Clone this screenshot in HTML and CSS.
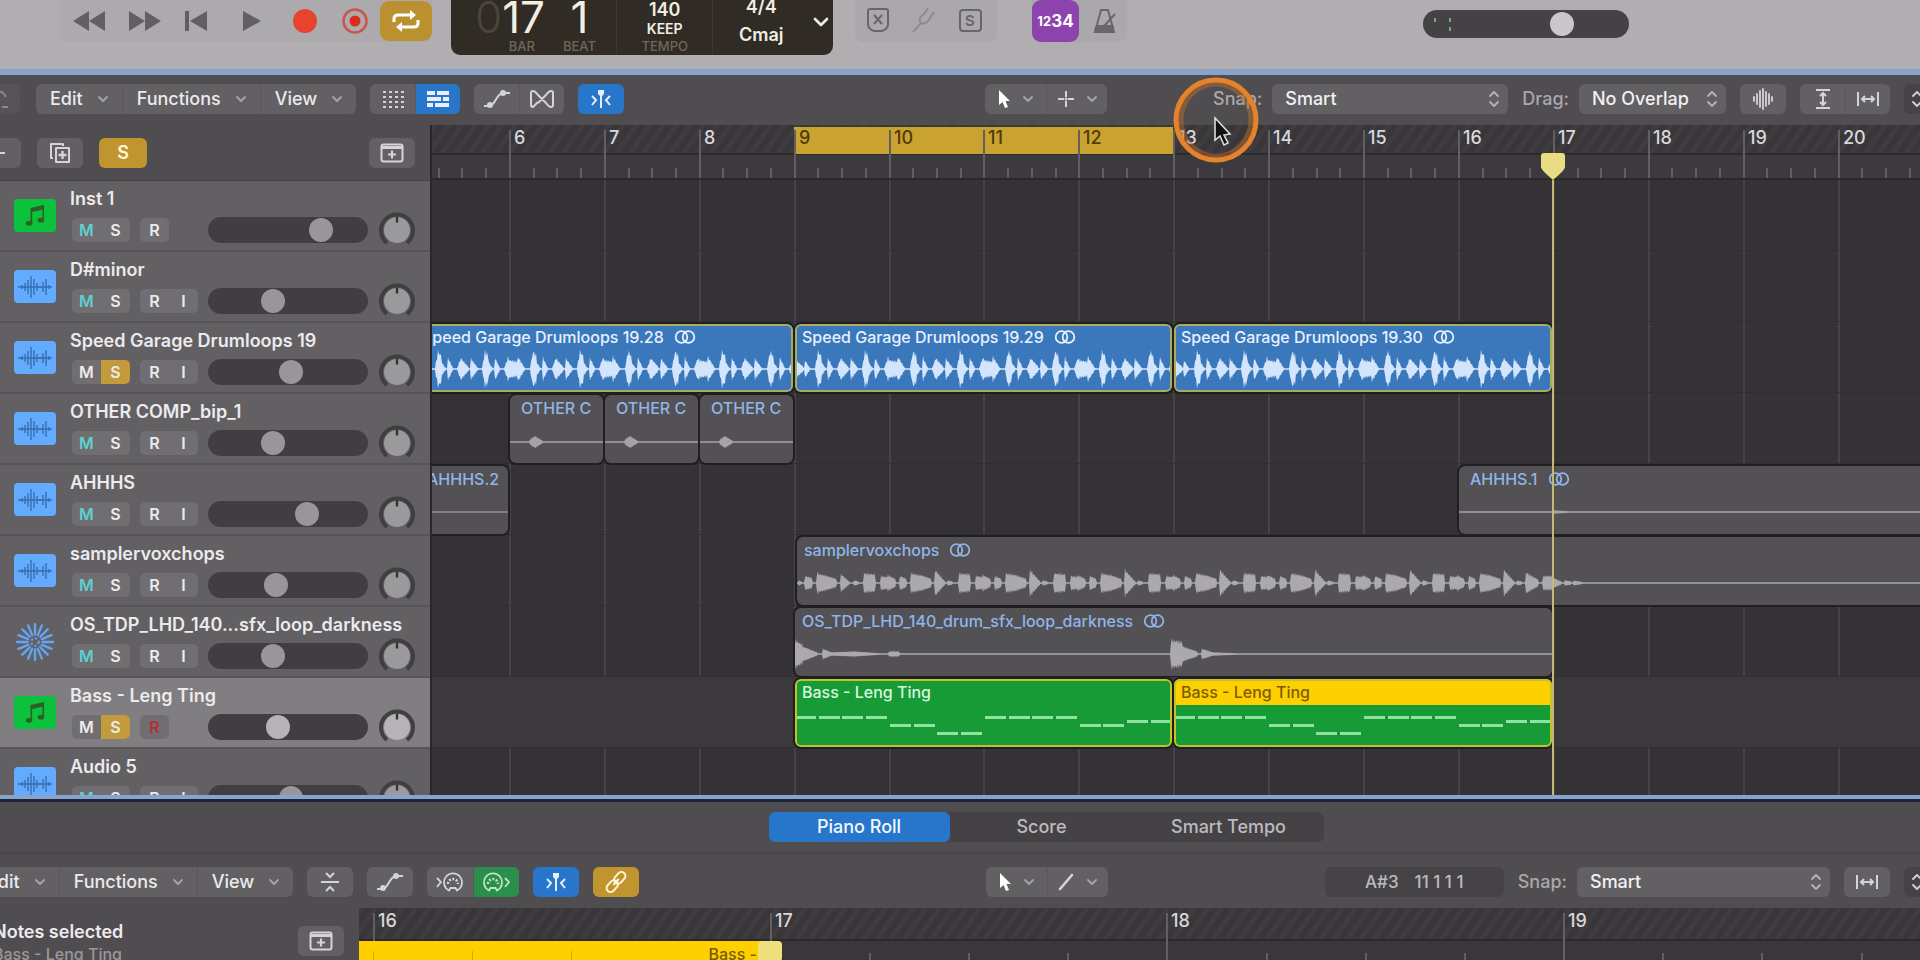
FILE: index.html
```html
<!DOCTYPE html>
<html lang="en">
<head>
<meta charset="utf-8">
<title>Arrangement</title>
<link rel="stylesheet" href="styles.css">
</head>
<body>
<svg class="defs" aria-hidden="true">
  <symbol id="chev" viewBox="0 0 12 12"><path d="M2 4l4 4 4-4" fill="none" stroke="currentColor" stroke-width="1.8" stroke-linecap="round" stroke-linejoin="round"/></symbol>
  <symbol id="updown" viewBox="0 0 12 20"><path d="M2 7l4-4 4 4M2 13l4 4 4-4" fill="none" stroke="currentColor" stroke-width="1.8" stroke-linecap="round" stroke-linejoin="round"/></symbol>
  <symbol id="dots" viewBox="0 0 24 18"><g fill="currentColor"><path id="dr" d="M2 1h3v2H2zM8 1h3v2H8zM14 1h3v2h-3zM20 1h3v2h-3z"/><use href="#dr" y="5"/><use href="#dr" y="10"/><use href="#dr" y="15"/></g></symbol>
  <symbol id="lanes" viewBox="0 0 24 18"><path d="M1 1h8v4H1zM11 1h12v4H11zM1 7h14v4H1zM17 7h6v4h-6zM1 13h6v4H1zM9 13h14v4H9z" fill="currentColor"/></symbol>
  <symbol id="auto" viewBox="0 0 28 20"><path d="M1 17h6C13 15 13 5 20 4h7" fill="none" stroke="currentColor" stroke-width="2"/><circle cx="7" cy="16" r="3" fill="currentColor"/><circle cx="20" cy="4" r="3" fill="currentColor"/></symbol>
  <symbol id="flex" viewBox="0 0 26 20"><path d="M9 13L4 18Q2 18 2 16V4Q2 2 4 2Q6 2 9 6L17 14Q20 18 22 18Q24 18 24 16V4Q24 2 22 2Q20 2 17 6L9 14" fill="none" stroke="currentColor" stroke-width="2" stroke-linejoin="round"/></symbol>
  <symbol id="catch" viewBox="0 0 22 20"><path d="M8 1h6v4l-3 3-3-3z" fill="currentColor"/><path d="M11 6v13M2 7l4 4-4 5M20 7l-4 4 4 5" fill="none" stroke="currentColor" stroke-width="2"/></symbol>
  <symbol id="arrow" viewBox="0 0 14 20"><path d="M2 1v15l3.500-3 2.500 6 3-1-2.500-6H13z" fill="#fff"/></symbol>
  <symbol id="plus" viewBox="0 0 18 18"><path d="M9 1v6M9 11v6M1 9h6M11 9h6" stroke="currentColor" stroke-width="2" fill="none"/><circle cx="9" cy="9" r="1.500" fill="currentColor"/></symbol>
  <symbol id="wave" viewBox="0 0 22 22"><path d="M2 9v4M5 6v10M8 3v16M11 1v20M14 4v14M17 6v10M20 9v4" stroke="currentColor" stroke-width="1.800" stroke-linecap="round"/></symbol>
  <symbol id="vfit" viewBox="0 0 18 20"><path d="M2 1h14M2 19h14M9 4v12M6 7l3-3 3 3M6 13l3 3 3-3" fill="none" stroke="currentColor" stroke-width="2"/></symbol>
  <symbol id="hfit" viewBox="0 0 22 18"><path d="M1 2v14M21 2v14M5 9h12M8 6L5 9l3 3M14 6l3 3-3 3" fill="none" stroke="currentColor" stroke-width="2"/></symbol>
  <symbol id="copy" viewBox="0 0 22 22"><path d="M7 6h13v14H7zM4 16H2V2h12v2" fill="none" stroke="currentColor" stroke-width="2" stroke-linejoin="round"/><path d="M13.500 9v8M9.500 13h8" stroke="currentColor" stroke-width="2.400"/></symbol>
  <symbol id="add" viewBox="0 0 24 20"><rect x="1.500" y="1.500" width="21" height="17" rx="2" fill="none" stroke="currentColor" stroke-width="2"/><path d="M2 4.500h20" stroke="currentColor" stroke-width="3"/><path d="M12 7.500v8M8 11.500h8" stroke="currentColor" stroke-width="2.200"/></symbol>
  <symbol id="note" viewBox="0 0 24 26"><path d="M8 20V5l13-3v14" fill="none" stroke="currentColor" stroke-width="1.800"/><path d="M8 5l13-3v4L8 9z" fill="currentColor"/><ellipse cx="5.500" cy="21" rx="3.600" ry="2.600" fill="currentColor"/><ellipse cx="18.500" cy="17.500" rx="3.600" ry="2.600" fill="currentColor"/></symbol>
  <symbol id="audio" viewBox="0 0 36 26"><path d="M1 13h34M5 11v4M8 9v8M11 6v14M14 2v22M17 5v16M20 9v8M23 12v2M26 8v10M29 5v16M32 11v4" stroke="currentColor" stroke-width="1.400"/></symbol>
  <symbol id="burst" viewBox="-18 -18 36 36"><g stroke="currentColor" stroke-width="2.200" stroke-linecap="round"><path id="ry" d="M0-17V-7M0 17V7"/><use href="#ry" transform="rotate(22.500)"/><use href="#ry" transform="rotate(45)"/><use href="#ry" transform="rotate(67.500)"/><use href="#ry" transform="rotate(90)"/><use href="#ry" transform="rotate(112.500)"/><use href="#ry" transform="rotate(135)"/><use href="#ry" transform="rotate(157.500)"/></g><circle r="3.500" fill="none" stroke="currentColor" stroke-width="2" stroke-dasharray="2 2"/></symbol>
  <symbol id="knob" viewBox="0 0 36 36"><path d="M8 31A16 16 0 1 1 28 31" fill="none" stroke="#403e41" stroke-width="4"/><circle cx="18" cy="18" r="13" fill="currentColor"/><path d="M18 4.500v6" stroke="#333" stroke-width="2.400"/></symbol>
  <symbol id="loop" viewBox="0 0 22 14"><circle cx="7.500" cy="7" r="5.800" fill="none" stroke="currentColor" stroke-width="1.800"/><circle cx="14.500" cy="7" r="5.800" fill="none" stroke="currentColor" stroke-width="1.800"/></symbol>
  <symbol id="collapse" viewBox="0 0 20 22"><path d="M1 11h18M6 2l4 4 4-4M6 20l4-4 4 4" fill="none" stroke="currentColor" stroke-width="2"/></symbol>
  <symbol id="palette" viewBox="0 0 20 20"><path d="M6 18.500A9 9 0 1 1 14 18.500L12.500 16h-5z" fill="none" stroke="currentColor" stroke-width="1.800"/><path d="M5 12a5 5 0 0 1 10 0" fill="none" stroke="currentColor" stroke-width="2.600" stroke-dasharray="2 1.500"/></symbol>
  <symbol id="midiin" viewBox="0 0 28 20"><path d="M1 6l4 4-4 5" fill="none" stroke="currentColor" stroke-width="1.800"/><use href="#palette" x="7" width="20" height="20"/></symbol>
  <symbol id="midiout" viewBox="0 0 28 20"><path d="M22 6l4 4-4 5" fill="none" stroke="currentColor" stroke-width="1.800"/><use href="#palette" x="0" width="20" height="20"/></symbol>
  <symbol id="link" viewBox="0 0 24 24"><g fill="none" stroke="currentColor" stroke-width="2" transform="rotate(-48 12 12)"><rect x="0" y="8" width="13" height="8" rx="4"/><rect x="11" y="8" width="13" height="8" rx="4"/><path d="M8 12h8"/></g></symbol>
  <symbol id="pencil" viewBox="0 0 18 20"><path d="M3 17L15 3" stroke="currentColor" stroke-width="2.600" stroke-linecap="round"/></symbol>
</svg>

<div class="app">
  <header class="control-bar">
    <div class="transport">
      <button aria-label="Rewind"><svg width="34" height="22"><path d="M17 1v20L1 11zM33 1v20L17 11z"/></svg></button>
      <button aria-label="Forward"><svg width="34" height="22"><path d="M1 1v20l16-10zM17 1v20l16-10z"/></svg></button>
      <button aria-label="Go to beginning"><svg width="24" height="22"><path d="M1 1h4v20H1zM23 1v20L6 11z"/></svg></button>
      <button aria-label="Play"><svg width="20" height="22"><path d="M1 1l18 10L1 21z"/></svg></button>
      <button aria-label="Record"><svg width="26" height="26"><circle cx="13" cy="13" r="12" fill="#e8432f"/></svg></button>
      <button aria-label="Capture recording"><svg width="28" height="28"><circle cx="14" cy="14" r="11.500" fill="none" stroke="#c9544a" stroke-width="2.500"/><circle cx="14" cy="14" r="5.500" fill="#e02a1c"/></svg></button>
      <button class="cycle" aria-label="Cycle"><svg width="28" height="24" fill="none" stroke="#fff" stroke-width="3"><path d="M2 13V10q0-4 4-4h13M26 11v3q0 4-4 4H9"/><path d="M18 1l6 5-6 5zM10 13l-6 5 6 5z" fill="#fff" stroke="none"/></svg></button>
    </div>
    <div class="lcd">
      <div class="pos"><p><i>0</i>17</p><small>BAR</small></div>
      <div class="pos beat"><p>1</p><small>BEAT</small></div>
      <div class="cell"><b>140</b><em>KEEP</em><small>TEMPO</small></div>
      <div class="cell sig"><b>4/4</b><b>Cmaj</b></div>
      <button class="lcd-menu" aria-label="Display mode"><svg width="18" height="18" viewBox="0 0 12 12"><use href="#chev"/></svg></button>
    </div>
    <div class="modes">
      <button aria-label="Replace"><svg width="24" height="26" fill="none" stroke="#69666a" stroke-width="2"><path d="M4 2h16q2 0 2 2v13q0 5-6 7H8q-6-2-6-7V4q0-2 2-2zM8 8l8 9M16 8l-8 9"/></svg></button>
      <button aria-label="Tuner"><svg width="26" height="28" fill="none" stroke="#8d8a8e" stroke-width="2"><path d="M2 26l8-9q-4-4 3-9l4-6M10 17q5 2 9-5l4-6"/></svg></button>
      <button aria-label="Solo"><svg width="25" height="25"><rect x="2" y="2" width="21" height="21" rx="3" fill="none" stroke="#69666a" stroke-width="2"/><text x="12" y="18" text-anchor="middle" class="solo-s">S</text></svg></button>
    </div>
    <div class="count">
      <button class="count-in"><small>12</small>34</button>
      <button aria-label="Metronome"><svg width="26" height="26" fill="none" stroke="#69666a" stroke-width="2"><path d="M9 2h7l6 22H3zM4 18h17M12 18L23 6"/><path d="M4 19h17v5H3z" fill="#69666a"/></svg></button>
    </div>
    <div class="master-wrap">
      <input class="master" type="range" min="0" max="100" value="70" aria-label="Master volume">
      <svg width="32" height="28" stroke="#6fa58f" stroke-width="2"><path d="M12 8v4M27 8v4M27 17v4"/></svg>
    </div>
  </header>

  <section class="arrange">
    <div class="toolbar">
      <button class="btn edge" aria-label="Back"><svg width="14" height="20" fill="none" stroke="#8a878b" stroke-width="2"><path d="M0 3q4-2 8 5M4 18h6"/></svg></button>
      <div class="group menus">
        <button>Edit<svg class="chev"><use href="#chev"/></svg></button>
        <button>Functions<svg class="chev"><use href="#chev"/></svg></button>
        <button>View<svg class="chev"><use href="#chev"/></svg></button>
      </div>
      <div class="group icons">
        <button aria-label="Grid"><svg width="24" height="18"><use href="#dots"/></svg></button>
        <button class="blue" aria-label="Tracks"><svg width="24" height="18"><use href="#lanes"/></svg></button>
      </div>
      <div class="group icons">
        <button aria-label="Automation"><svg width="28" height="20"><use href="#auto"/></svg></button>
        <button aria-label="Flex"><svg width="26" height="20"><use href="#flex"/></svg></button>
      </div>
      <button class="btn blue" aria-label="Catch playhead"><svg width="22" height="20"><use href="#catch"/></svg></button>
      <div class="group tools">
        <button aria-label="Pointer tool"><svg width="14" height="20"><use href="#arrow"/></svg><svg class="chev"><use href="#chev"/></svg></button>
        <button aria-label="Marquee tool"><svg width="18" height="18"><use href="#plus"/></svg><svg class="chev"><use href="#chev"/></svg></button>
      </div>
      <label for="snap">Snap:</label>
      <span class="pick snap"><select id="snap"><option>Smart</option></select><svg width="12" height="20"><use href="#updown"/></svg></span>
      <label for="drag">Drag:</label>
      <span class="pick drag"><select id="drag"><option>No Overlap</option></select><svg width="12" height="20"><use href="#updown"/></svg></span>
      <button class="btn" aria-label="Waveform zoom"><svg width="22" height="22"><use href="#wave"/></svg></button>
      <div class="group icons">
        <button aria-label="Fit vertically"><svg width="18" height="20"><use href="#vfit"/></svg></button>
        <button aria-label="Fit horizontally"><svg width="22" height="18"><use href="#hfit"/></svg></button>
      </div>
      <button class="btn cut" aria-label="Vertical zoom"><svg width="12" height="20"><use href="#updown"/></svg></button>
    </div>

    <div class="workspace">
      <div class="track-column">
        <div class="track-tools">
          <button class="btn edge2" aria-label="Add track"><svg width="14" height="18"><path d="M0 9h6" stroke="#d5d3d6" stroke-width="2"/></svg></button>
          <button class="btn" aria-label="Duplicate track"><svg width="22" height="22"><use href="#copy"/></svg></button>
          <button class="btn gold">S</button>
          <button class="btn push" aria-label="Track header options"><svg width="24" height="20"><use href="#add"/></svg></button>
        </div>
        <div id="tracks"></div>
      </div>
      <div class="timeline">
        <div class="ruler" id="ruler"></div>
        <div id="lanes-area"></div>
        <svg class="playhead-cap" id="cap" width="26" height="28"><path d="M1 3q0-3 3-3h18q3 0 3 3v11q0 3-12 13Q1 17 1 14z" fill="#e9dc83"/></svg>
        <div class="playhead" id="playhead"></div>
      </div>
    </div>
  </section>

  <section class="editor">
    <nav class="tab-bar"><div class="tabs"><button class="on">Piano Roll</button><button>Score</button><button>Smart Tempo</button></div></nav>
    <div class="toolbar low">
      <div class="group menus">
        <button>Edit<svg class="chev"><use href="#chev"/></svg></button>
        <button>Functions<svg class="chev"><use href="#chev"/></svg></button>
        <button>View<svg class="chev"><use href="#chev"/></svg></button>
      </div>
      <button class="btn" aria-label="Collapse"><svg width="20" height="22"><use href="#collapse"/></svg></button>
      <button class="btn" aria-label="Automation"><svg width="28" height="20"><use href="#auto"/></svg></button>
      <div class="group icons">
        <button aria-label="MIDI in"><svg width="28" height="20"><use href="#midiin"/></svg></button>
        <button class="green" aria-label="MIDI out"><svg width="28" height="20"><use href="#midiout"/></svg></button>
      </div>
      <button class="btn blue" aria-label="Catch playhead"><svg width="22" height="20"><use href="#catch"/></svg></button>
      <button class="btn gold" aria-label="Link"><svg width="24" height="24"><use href="#link"/></svg></button>
      <div class="group tools">
        <button aria-label="Pointer tool"><svg width="14" height="20"><use href="#arrow"/></svg><svg class="chev"><use href="#chev"/></svg></button>
        <button aria-label="Pencil tool"><svg width="18" height="20"><use href="#pencil"/></svg><svg class="chev"><use href="#chev"/></svg></button>
      </div>
      <output class="readout"><span>A#3</span><span>11 1 1 1</span></output>
      <label for="snap2">Snap:</label>
      <span class="pick snap2"><select id="snap2"><option>Smart</option></select><svg width="12" height="20"><use href="#updown"/></svg></span>
      <button class="btn" aria-label="Fit horizontally"><svg width="22" height="18"><use href="#hfit"/></svg></button>
      <button class="btn cut" aria-label="Vertical zoom"><svg width="12" height="20"><use href="#updown"/></svg></button>
    </div>
    <div class="roll">
      <div class="roll-info">
        <div class="roll-text"><h2>Notes selected</h2><p>Bass - Leng Ting</p></div>
        <button class="btn" aria-label="Editor options"><svg width="24" height="20"><use href="#add"/></svg></button>
      </div>
      <div class="roll-ruler" id="roll"></div>
    </div>
  </section>
</div>

<svg class="pointer" width="86" height="88" aria-hidden="true">
  <ellipse cx="43" cy="43" rx="37" ry="38" fill="none" stroke="#b86c2c" stroke-opacity=".5" stroke-width="9"/>
  <ellipse cx="43" cy="43" rx="40" ry="40" fill="none" stroke="#e5822c" stroke-width="5"/>
  <path d="M42 41v22l5-4 4 9 4-2-4-8 6-1z" fill="#111" stroke="#ddd" stroke-width="1.600"/>
</svg>
<script src="app.js"></script>
</body>
</html>
```
FILE: styles.css
```css
* { box-sizing: border-box; }
body { margin: 0; background: #504d51; color: #eceaed; font: 500 18px/24px Inter, "Liberation Sans", sans-serif; }
button, select, input { font: inherit; color: inherit; margin: 0; }
button { border: 0; padding: 0; background: none; display: flex; align-items: center; justify-content: center; }
h2, p { margin: 0; }
svg { flex: none; display: block; }
.defs { position: absolute; width: 0; height: 0; }
.app { height: 100vh; display: flex; flex-direction: column; overflow: hidden; }

/* control bar */
.control-bar { height: 69px; flex: none; display: flex; align-items: flex-start; background: #b1aeb2; }
.transport { margin-left: 60px; height: 42px; width: 372px; padding-left: 12px; display: flex; align-items: center; background: #acaaad; border-radius: 0 0 8px 8px; fill: #625f63; }
.transport button { margin-right: 22px; }
.transport button:nth-child(3) { margin-right: 34px; }
.transport button:nth-child(4) { margin-right: 30px; }
.transport button:nth-child(5) { margin-right: 23px; }
.transport button:nth-child(6) { margin-right: 11px; }
.transport .cycle { width: 52px; height: 40px; margin: 0; border-radius: 9px; background: #bb902e; }
.lcd { margin-left: 19px; width: 382px; height: 55px; display: flex; background: #302b24; border-radius: 0 0 9px 9px; color: #f1eee2; overflow: hidden; }
.lcd small { font-size: 13px; line-height: 14px; color: #6f6857; }
.pos { display: flex; flex-direction: column; align-items: flex-end; justify-content: flex-end; padding: 0 0 2px 24px; }
.pos small { margin-right: 10px; }
.pos p { font-size: 44px; line-height: 44px; font-weight: 400; }
.pos i { font-style: normal; font-weight: 300; color: #4a453d; }
.pos.beat { align-items: center; padding-left: 18px; padding-right: 20px; }
.pos.beat small { margin: 0; }
.cell { flex: 1; display: flex; flex-direction: column; align-items: center; justify-content: flex-end; padding-bottom: 2px; border-left: 1px solid #3b362e; }
.cell b { font-size: 18px; font-weight: 600; line-height: 18px; }
.cell em { font: 600 14px/20px Inter, sans-serif; }
.cell.sig { gap: 10px; padding-bottom: 11px; }
.lcd-menu { width: 24px; height: 44px; }
.modes, .count { height: 42px; display: flex; align-items: center; background: #aba8ac; border-radius: 0 0 8px 8px; }
.modes { margin-left: 22px; width: 142px; padding: 0 4px 2px 0; justify-content: space-around; }
.solo-s { font-size: 15px; font-weight: 600; fill: #69666a; }
.count { margin-left: 35px; gap: 13px; padding-right: 9px; }
.count-in { width: 47px; height: 42px; border-radius: 9px; background: #8d43ae; color: #fff; font-weight: 700; font-size: 17px; }
.count-in small { font-size: 13px; }

/* sliders */
input[type=range] { appearance: none; height: 26px; border-radius: 13px; background: #403e41; }
input[type=range]::-webkit-slider-thumb { appearance: none; width: 24px; height: 24px; border-radius: 50%; background: #999699; }
.master-wrap { display: grid; margin: 10px 0 0 296px; }
.master-wrap > * { grid-area: 1 / 1; pointer-events: none; }
.master-wrap .master { width: 206px; height: 28px; border-radius: 14px; background: #454246; pointer-events: auto; }
.master-wrap .master::-webkit-slider-thumb { background: #c9c7ca; }

/* toolbars */
.arrange { flex: 1; min-height: 0; display: flex; flex-direction: column; border-top: 6px solid #8ba4c5; border-bottom: 4px solid #86a4cc; overflow: hidden; }
.toolbar { height: 50px; flex: none; display: flex; align-items: center; gap: 14px; padding-bottom: 3px; border-top: 1px solid #3f536d; overflow: hidden; white-space: nowrap; background: #504d51; }
.toolbar > * { flex: none; }
.group { display: flex; height: 30px; border-radius: 6px; overflow: hidden; background: #626063; }
.group button + button { border-left: 1px solid #585659; }
.menus button { padding: 0 13px 0 14px; gap: 14px; }
.chev { width: 12px; height: 12px; color: #a5a3a6; }
.icons button { width: 45px; color: #d5d3d6; }
.btn { width: 46px; height: 30px; border-radius: 6px; background: #626063; color: #d5d3d6; flex: none; }
.tools { margin-left: auto; }
.tools button { width: 61px; gap: 11px; color: #d5d3d6; }
.btn.blue, .group .blue { background: #2776c9; color: #e6effa; }
.group .green { background: #2b8f4b; color: #b9e3c3; }
.btn.gold { background: #c0952f; color: #fff5dc; }
.toolbar .edge { width: 30px; margin: 0 2px 0 -10px; background: #565357; }
.toolbar .cut { margin-right: -30px; background: #464347; justify-content: flex-start; padding-left: 7px; }
.toolbar label { color: #a9a7aa; margin-right: -4px; }
.arrange .tools { margin-right: 92px; }
.pick { display: grid; grid-template-columns: 1fr 28px; align-items: center; height: 30px; border-radius: 6px; background: #626063; color: #f2f0f3; }
.pick select { grid-area: 1 / 1 / 2 / 3; appearance: none; width: 100%; height: 30px; padding: 0 24px 0 13px; border: 0; background: none; }
.pick svg { grid-area: 1 / 2; justify-self: center; color: #b5b3b6; pointer-events: none; }
.snap { width: 236px; }
.drag { width: 147px; }
.snap2 { width: 253px; }

/* track headers */
.workspace { flex: 1; min-height: 0; display: grid; grid-template-columns: 430px 1fr; }
.track-column { overflow: hidden; background: #504d51; }
.track-tools { height: 56px; display: flex; align-items: center; gap: 16px; padding: 0 15px 0 0; border-bottom: 1px solid #434144; }
.track-tools .edge2 { width: 31px; margin-left: -10px; }
.track-tools .gold { font-weight: 600; width: 48px; }
.track-tools .push { margin-left: auto; }
.track { height: 71px; display: grid; grid-template-columns: 42px 1fr; column-gap: 14px; padding: 6px 0 0 14px; background: #626063; border-bottom: 2px solid #565457; }
.track.sel { background: #807e81; }
.badge { width: 42px; height: 33px; margin-top: 12px; border-radius: 4px; display: flex; align-items: center; justify-content: center; background: #62abff; color: #376fae; }
.badge.inst { background: #0cc13b; color: #2d5f28; }
.badge.burst { background: none; color: #63a6f5; }
.track-name { line-height: 24px; font-weight: 600; }
.controls { display: flex; align-items: center; height: 36px; padding-left: 2px; margin-top: 1px; }
.controls > * { flex: none; }
.pair { display: flex; border-radius: 5px; overflow: hidden; background: #706e71; }
.pair.first { width: 58px; margin-right: 10px; }
.pair.second { width: 58px; margin-right: 10px; }
.pair button { width: 29px; height: 24px; font-size: 16px; font-weight: 600; }
.pair .mute { color: #5fd0cf; }
.pair .solo { background: #c39a3c; }
.pair .arm { color: #b52f35; }
.pair.only { background: none; }
.pair.only button { background: #706e71; border-radius: 5px; }
.controls input { width: 160px; margin-right: 11px; }
.controls svg { color: #9b999c; }
.sel .controls svg { color: #b5b3b6; }
.sel input::-webkit-slider-thumb { background: #b5b3b6; }

/* timeline */
.timeline { position: relative; overflow: hidden; background: #343235; border-left: 2px solid #29272a; }
.ruler { position: relative; height: 55px; background: linear-gradient(#3b383c 28px, #2c2a2d 28px, #2c2a2d 30px, #3d3a3e 30px); border-bottom: 2px solid #2a282b; }
.hatch { position: absolute; inset: 0 0 auto; height: 28px; background: repeating-linear-gradient(125deg, #3f3c40 0 5px, #383639 5px 11px); }
.cycle-range { position: absolute; top: 2px; height: 27px; background: #c9a230; }
.bar-line { position: absolute; top: 5px; bottom: 0; width: 2px; background: #615f62; }
.bar-num { position: absolute; top: 1px; padding-left: 5px; color: #d9d7da; }
.in-cycle { color: #4f3a0b; }
.tick { position: absolute; bottom: 0; height: 10px; width: 2px; background: #615f62; }
#lanes-area { position: relative; }
.lane { position: relative; height: 71px; border-bottom: 1px solid #302e31; }
.lane.sel { background: #3b393c; }
.grid-line { position: absolute; top: 0; bottom: 0; width: 2px; background: #454346; }
.region { position: absolute; top: 2px; height: 68px; border-radius: 6px; overflow: hidden; background: #535154; box-shadow: 0 0 0 2px #201e21; color: #8fb5ea; font-size: 16px; line-height: 26px; white-space: nowrap; }
.region .label { position: relative; display: flex; align-items: center; gap: 10px; padding-left: 7px; }
.region.pad .label { padding-left: 11px; }
.region .art { position: absolute; left: 0; top: 0; }
.region.blue { background: #3a78bb; color: #e8f1fd; }
.region.midi { background: #169b37; color: #d8f7dd; }
.region.hot .label { background: #ffd000; color: #7a5c00; }
.region.picked::after { content: ""; position: absolute; inset: 0; border: 2px solid #a9ab5e; border-radius: 6px; }
.region.midi::after { border-color: #c4c22c; }
.playhead { position: absolute; top: 55px; bottom: 0; width: 2px; background: #c3b96f; }
.playhead-cap { position: absolute; top: 28px; }

/* editor */
.editor { flex: none; border-top: 3px solid #20233a; }
.tab-bar { height: 52px; display: flex; justify-content: center; align-items: center; padding: 0 0 0 172px; border-bottom: 2px solid #49464a; }
.tabs { width: 555px; display: grid; grid-template-columns: 181px 1fr 190px; border-radius: 6px; background: #454246; color: #bdbbbe; }
.tabs button { height: 30px; border-radius: 6px; }
.tabs .on { background: #2776c9; color: #f2f7fd; }
.toolbar.low { height: 54px; border: 0; padding: 2px 0 0; }
.low .menus { margin-left: -27px; }
.low .group.icons button { width: 46px; }
.low .tools { margin-right: 203px; }
.readout { width: 179px; height: 30px; border-radius: 6px; display: flex; align-items: center; justify-content: center; gap: 16px; background: #464347; color: #bdbbbe; font-size: 17px; }
.roll { height: 52px; display: grid; grid-template-columns: 359px 1fr; }
.roll-info { display: flex; justify-content: space-between; padding: 12px 15px 0 0; overflow: hidden; }
.roll-text { margin-left: -7px; }
.roll-text h2 { font-size: 18px; font-weight: 600; line-height: 24px; }
.roll-text p { font-size: 16px; line-height: 20px; color: #99979a; }
.roll-info .btn { margin-top: 6px; }
.roll-ruler { position: relative; overflow: hidden; background: linear-gradient(#3b383c 31px, #2a282b 31px, #2a282b 33px, #3a373b 33px); }
.roll-region { position: absolute; left: 0; top: 33px; bottom: 0; text-align: right; padding-right: 13px; background: #ffd000; color: #7a5c00; font-size: 16px; line-height: 26px; }
.roll-region span { position: absolute; top: 10px; bottom: 0; width: 1px; background: #dba800; }
.roll-cap { position: absolute; top: 33px; width: 24px; height: 28px; border-radius: 4px 4px 12px 12px; background: #f0df7d; }
.roll-ruler .tick { height: 7px; }
.roll-ruler .hatch { height: 31px; }

.pointer { position: absolute; left: 1173px; top: 77px; pointer-events: none; }
```
FILE: app.js
```js
const BAR = 94.9;
const barX = bar => Math.round((bar - 9) * BAR + 361.6);
const make = (parent, cls, styles = {}, html = '') => {
  const el = document.createElement('div');
  el.className = cls;
  el.innerHTML = html;
  for (const key in styles) el.style[key] = styles[key] + 'px';
  parent.append(el);
  return el;
};

/* Track headers */
const tracks = [
  { name: 'Inst 1', kind: 'inst', vol: 74 },
  { name: 'D#minor', vol: 39 },
  { name: 'Speed Garage Drumloops 19', vol: 52, solo: true },
  { name: 'OTHER COMP_bip_1', vol: 39 },
  { name: 'AHHHS', vol: 64 },
  { name: 'samplervoxchops', vol: 41 },
  { name: 'OS_TDP_LHD_140...sfx_loop_darkness', kind: 'burst', vol: 39 },
  { name: 'Bass - Leng Ting', kind: 'inst', vol: 43, solo: true, sel: true },
  { name: 'Audio 5', vol: 52 }
];
const badges = {
  inst: '<svg width="22" height="24"><use href="#note"/></svg>',
  burst: '<svg width="38" height="38"><use href="#burst"/></svg>',
  audio: '<svg width="36" height="26"><use href="#audio"/></svg>'
};
const list = document.getElementById('tracks');
tracks.forEach(t => {
  const kind = t.kind || 'audio';
  make(list, 'track' + (t.sel ? ' sel' : ''), {}, `
    <div class="badge ${kind}">${badges[kind]}</div>
    <div>
      <div class="track-name">${t.name}</div>
      <div class="controls">
        <div class="pair first"><button class="${t.solo ? '' : 'mute'}">M</button><button class="${t.solo ? 'solo' : ''}">S</button></div>
        <div class="pair second ${kind === 'inst' ? 'only' : ''}"><button class="${t.sel ? 'arm' : ''}">R</button>${kind === 'inst' ? '' : '<button>I</button>'}</div>
        <input type="range" min="0" max="100" value="${t.vol}" aria-label="${t.name} volume">
        <svg width="36" height="36"><use href="#knob"/></svg>
      </div>
    </div>`);
});

/* Ruler */
const ruler = document.getElementById('ruler');
make(ruler, 'hatch');
make(ruler, 'cycle-range', { left: barX(9), width: barX(13) - barX(9) });
for (let bar = 5; bar < 22; bar++) {
  make(ruler, 'bar-line', { left: barX(bar) });
  const cyc = bar >= 9 && bar < 13 ? ' in-cycle' : '';
  if (bar > 5 && bar < 21) make(ruler, 'bar-num' + cyc, { left: barX(bar) }, bar);
  for (let q = 1; q < 4; q++) make(ruler, 'tick', { left: barX(bar + q / 4) });
}

/* Lanes and grid */
const area = document.getElementById('lanes-area');
const lanes = tracks.map(t => make(area, 'lane' + (t.sel ? ' sel' : '')));
for (let bar = 6; bar < 22; bar++) {
  const line = make(area, 'grid-line', { left: barX(bar) });
  area.prepend(line);
}

/* Waveforms: hits are [start, end, level at start, level at end] */
const wave = (width, mid, hits, color) => {
  const amp = new Array(width + 1).fill(0.7);
  hits.forEach(([a, b, h0, h1]) => {
    for (let x = Math.max(0, a); x <= b && x <= width; x++) {
      const level = h0 + (h1 - h0) * (x - a) / Math.max(1, b - a);
      amp[x] = Math.max(amp[x], level * (0.84 + 0.16 * Math.cos(x * 2.7)));
    }
  });
  const top = amp.map((v, x) => `${x} ${(mid - v).toFixed(1)}`);
  const low = amp.map((v, x) => `${x} ${(mid + v).toFixed(1)}`).reverse();
  return `<svg class="art" width="${width}" height="68"><path d="M${top.concat(low).join('L')}Z" fill="${color}"/></svg>`;
};
const drumHits = [[0, 8, 11, 3], [10, 15, 10, 1]];
for (let k = 0; k < 8; k++) {
  const o = Math.round(21 + k * 47.4);
  drumHits.push([o, o + 2, 8, 19], [o + 2, o + 5, 20, 16], [o + 5, o + 9, 9, 2], [o + 12, o + 17, 13, 1],
    [o + 22, o + 25, 4, 13], [o + 25, o + 32, 12, 3], [o + 35, o + 42, k % 2 ? 14 : 12, 1]);
  if (k % 2) drumHits.push([o + 27, o + 36, 10, 8]);
}
const voxHits = [[2, 4, 3, 2], [8, 15, 8, 6], [20, 24, 12, 9], [24, 39, 10, 5], [44, 52, 10, 2], [57, 61, 3, 2]];
for (let k = 0; k < 7; k++) {
  const o = Math.round(67 + k * BAR);
  voxHits.push([o, o + 11, 11, 10], [o + 17, o + 23, 8, 7], [o + 24, o + 31, 9, 5], [o + 36, o + 42, 8, 5],
    [o + 47, o + 57, 11, 9], [o + 57, o + 67, 9, 5], [o + 71, o + 81, 15, 2], [o + 84, o + 88, 3, 2]);
}
voxHits.push([729, 741, 12, 4], [746, 756, 8, 8], [756, 764, 6, 2], [768, 774, 3, 2], [777, 786, 3, 1]);
const sfxHits = [[0, 7, 16, 11], [7, 22, 9, 2], [28, 36, 6, 2], [36, 60, 2, 3], [60, 84, 3, 1], [94, 104, 3, 3],
  [376, 387, 16, 14], [387, 402, 9, 3], [407, 418, 6, 2], [418, 440, 2, 1]];

const region = (lane, left, right, cls, name, opts = {}) => {
  const loop = opts.loop ? '<svg width="22" height="14"><use href="#loop"/></svg>' : '';
  make(lanes[lane], 'region ' + cls, { left, width: right - left }, `${opts.art || ''}<div class="label">${name}${loop}</div>`);
};
[5, 9, 13].forEach((bar, i) => {
  const w = barX(bar + 4) - barX(bar) - 2;
  region(2, barX(bar) + 1, barX(bar) + 1 + w, 'blue picked', 'Speed Garage Drumloops 19.' + (28 + i),
    { loop: true, art: wave(w, 45, drumHits, '#d3e5fc') });
});
[6, 7, 8].forEach(bar => region(3, barX(bar) + 1, barX(bar + 1) - 1, 'pad', 'OTHER C',
  { art: wave(93, 47, [[20, 25, 3, 7], [25, 32, 7, 2]], '#a5a3a6') }));
region(4, -12, barX(6) - 1, '', 'AHHHS.2', { art: wave(90, 46, [], '#908e91') });
region(4, barX(16) + 1, barX(22), 'pad', 'AHHHS.1', { loop: true, art: wave(560, 46, [[94, 110, 2, 1]], '#a5a3a6') });
region(5, barX(9) + 3, barX(22), '', 'samplervoxchops', { loop: true, art: wave(1230, 46, voxHits, '#aba9ac') });
region(6, barX(9) + 1, barX(17) - 1, '', 'OS_TDP_LHD_140_drum_sfx_loop_darkness',
  { loop: true, art: wave(757, 46, sfxHits, '#aba9ac') });

/* Bass notes, one height per sixteenth of the region */
const steps = [37, 37, 37, 37, 45, 45, 53, 53, 37, 37, 37, 37, 45, 45, 41, 41];
const notes = `<svg class="art" width="380" height="68" fill="#8ee3a0">${steps.map((y, i) =>
  `<rect x="${Math.round(i * BAR / 4)}" y="${y}" width="21" height="3"/>`).join('')}</svg>`;
region(7, barX(9) + 1, barX(13) - 1, 'midi picked', 'Bass - Leng Ting', { art: notes });
region(7, barX(13) + 1, barX(17) - 1, 'midi picked hot', 'Bass - Leng Ting', { art: notes });

document.getElementById('playhead').style.left = barX(17) - 1 + 'px';
document.getElementById('cap').style.left = barX(17) - 13 + 'px';

/* Piano roll ruler */
const roll = document.getElementById('roll');
const rollX = bar => Math.round((bar - 16) * 396.7 + 14);
make(roll, 'hatch');
for (let bar = 16; bar < 20; bar++) {
  make(roll, 'bar-line', { left: rollX(bar) });
  make(roll, 'bar-num', { left: rollX(bar) }, bar);
  for (let q = 1; q < 4; q++) make(roll, 'tick', { left: rollX(bar + q / 4) });
}
const yellow = make(roll, 'roll-region', { width: rollX(17) }, 'Bass -');
[0, 0.25, 0.5].forEach(q => {
  const s = document.createElement('span');
  s.style.left = rollX(16 + q) + 'px';
  yellow.append(s);
});
make(roll, 'roll-cap', { left: rollX(17) - 12 });
```
